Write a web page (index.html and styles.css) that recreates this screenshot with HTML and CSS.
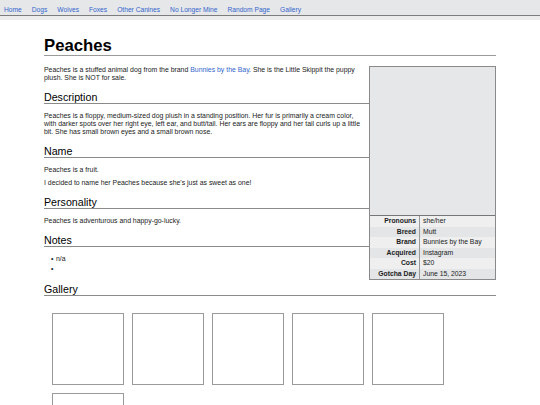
FILE: index.html
```html
<!DOCTYPE html>
<html lang="en">
<head>
<meta charset="utf-8">
<title>Peaches</title>
<link rel="stylesheet" href="styles.css">
</head>
<body>
<nav class="topnav">
  <a href="#">Home</a>
  <a href="#">Dogs</a>
  <a href="#">Wolves</a>
  <a href="#">Foxes</a>
  <a href="#">Other Canines</a>
  <a href="#">No Longer Mine</a>
  <a href="#">Random Page</a>
  <a href="#">Gallery</a>
</nav>
<main class="page">
  <h1 class="title">Peaches</h1>
  <aside class="infobox">
    <div class="infobox-image"></div>
    <table class="infobox-table">
      <tr><th>Pronouns</th><td>she/her</td></tr>
      <tr><th>Breed</th><td>Mutt</td></tr>
      <tr><th>Brand</th><td>Bunnies by the Bay</td></tr>
      <tr><th>Acquired</th><td>Instagram</td></tr>
      <tr><th>Cost</th><td>$20</td></tr>
      <tr><th>Gotcha Day</th><td>June 15, 2023</td></tr>
    </table>
  </aside>
  <p class="text">Peaches is a stuffed animal dog from the brand <a href="#">Bunnies by the Bay</a>. She is the Little Skippit the puppy plush. She is NOT for sale.</p>
  <h2 class="section">Description</h2>
  <p class="text">Peaches is a floppy, medium-sized dog plush in a standing position. Her fur is primarily a cream color, with darker spots over her right eye, left ear, and butt/tail. Her ears are floppy and her tail curls up a little bit. She has small brown eyes and a small brown nose.</p>
  <h2 class="section">Name</h2>
  <p class="text">Peaches is a fruit.</p>
  <p class="text">I decided to name her Peaches because she's just as sweet as one!</p>
  <h2 class="section">Personality</h2>
  <p class="text">Peaches is adventurous and happy-go-lucky.</p>
  <h2 class="section">Notes</h2>
  <ul class="notes">
    <li>n/a</li>
    <li></li>
  </ul>
  <h2 class="section gallery-title">Gallery</h2>
  <div class="gallery">
    <div class="thumb"></div>
    <div class="thumb"></div>
    <div class="thumb"></div>
    <div class="thumb"></div>
    <div class="thumb"></div>
    <div class="thumb"></div>
  </div>
</main>
</body>
</html>
```

FILE: styles.css
```css
html, body {
  margin: 0;
  padding: 0;
  background: #ffffff;
}
body {
  font-family: "Liberation Sans", Arial, sans-serif;
  font-size: 6.9px;
  line-height: 8px;
  color: #202122;
}
a {
  color: #3366cc;
  text-decoration: none;
}
.topnav {
  display: flex;
  gap: 10px;
  padding: 6px 0 1px 4px;
  height: 8px;
  font-size: 6.67px;
  background: #e6e7e9;
  border-bottom: 1px solid #7c7c7c;
  box-shadow: 0 4px 0 #ececec;
}
.topnav a {
  color: #3366cc;
}
.page {
  padding: 20px 44px 0;
}
.title {
  margin: 0 0 10px;
  font-size: 16.7px;
  line-height: 19px;
  font-weight: bold;
  color: #000;
  border-bottom: 1px solid #9a9a9a;
}
.text {
  margin: 0 0 5px;
}
.section {
  margin: 9px 0 8px;
  font-size: 10.67px;
  line-height: 12px;
  font-weight: normal;
  color: #000;
  border-bottom: 1px solid #8a8a8a;
}
.section.name-fix {
  margin-top: 7px;
}
.notes {
  margin: 0;
  padding-left: 7px;
  list-style: none;
}
.notes li {
  display: flex;
  min-height: 8px;
  margin-bottom: 2px;
}
.notes li::before {
  content: "\2022";
  width: 5px;
  flex: none;
}
.infobox {
  float: right;
  width: 125px;
  margin: 0 0 3px 5px;
  border: 1px solid #8a8a8a;
  background: #efefef;
}
.infobox-image {
  height: 148px;
  background: #e6e7e9;
  border-bottom: 1px solid #777;
}
.infobox-table {
  width: 100%;
  border-collapse: collapse;
  font-size: 6.8px;
  line-height: 10.5px;
}
.infobox-table th {
  width: 46px;
  padding: 0 3px 0 0;
  text-align: right;
  font-weight: bold;
  color: #202122;
  border-right: 1px solid #9a9a9a;
  white-space: nowrap;
}
.infobox-table td {
  padding: 0 0 0 3px;
  color: #202122;
}
.infobox-table tr:nth-child(even) {
  background: #e4e5e7;
}
.gallery-title {
  clear: both;
}
.gallery {
  display: flex;
  flex-wrap: wrap;
  gap: 8px;
  padding: 9px 0 0 8px;
}
.thumb {
  width: 70px;
  height: 70px;
  border: 1px solid #9a9a9a;
}
```
